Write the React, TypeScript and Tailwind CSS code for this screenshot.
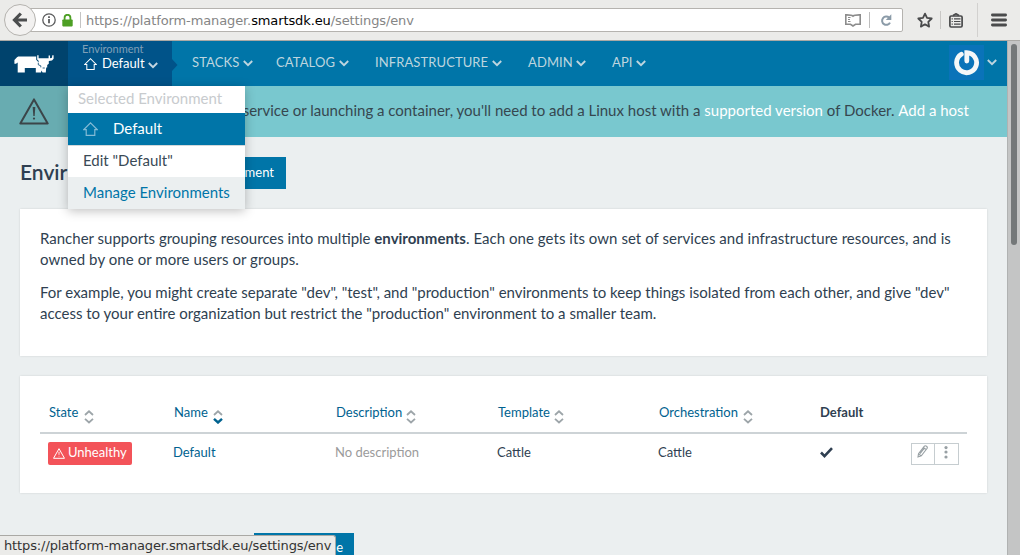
import React from "react";

const lato = "font-['Lato',sans-serif]";
const deja = "font-['DejaVu_Sans',sans-serif]";

function Chevron({ className = "" }: { className?: string }) {
  return (
    <svg width="10" height="7" viewBox="0 0 10 7" fill="none" stroke="currentColor" strokeWidth="1.9" className={`shrink-0 ${className}`}>
      <path d="M.8 1 5 5.2 9.2 1" />
    </svg>
  );
}

function House({ className = "" }: { className?: string }) {
  return (
    <svg viewBox="0 0 14 13" fill="none" stroke="currentColor" strokeWidth="1.1" className={className}>
      <path d="M3 7H.8L7 .8 13.2 7H11v5.4H3V7Z" />
    </svg>
  );
}

function Sort({ active = false }: { active?: boolean }) {
  return (
    <svg width="10" height="14" viewBox="0 0 10 14" fill="none" strokeWidth="1.8" className="mt-[8px] shrink-0">
      <path d="M1 5 5 1.3 9 5" stroke="#9da5a9" />
      <path d="M1 8.8 5 12.5 9 8.8" stroke={active ? "#00628f" : "#9da5a9"} strokeWidth={active ? 2.4 : 1.8} />
    </svg>
  );
}

function Warning({ className = "", strokeWidth = 2 }: { className?: string; strokeWidth?: number }) {
  return (
    <svg viewBox="0 0 30 27" fill="none" stroke="currentColor" strokeWidth={strokeWidth} strokeLinejoin="round" className={className}>
      <path d="M15 1.4 28.7 25.5H1.3Z" />
      <path d="M13.7 9h2.6l-.6 9h-1.4Z" fill="currentColor" stroke="none" />
      <circle cx="15" cy="20.6" r="1.1" fill="currentColor" stroke="none" />
    </svg>
  );
}

function BrowserBar() {
  return (
    <header className={`relative z-10 flex h-[41px] shrink-0 items-center border-b border-[#aaa9a5] bg-[#ebebe9] ${deja}`}>
      <div className="z-10 ml-1 flex size-8 shrink-0 items-center justify-center rounded-full border border-[#b5b3af] bg-[#f2f1f0]">
        <svg width="16" height="16" viewBox="0 0 16 16" fill="none" stroke="#4b4d4e" strokeWidth="3.2">
          <path d="M8.8 1.5 2.5 8l6.3 6.5M3 8h12" />
        </svg>
      </div>
      <div className="-ml-4 flex h-6 w-[883px] shrink-0 items-center rounded-r-[2px] border border-[#b5b3af] bg-white pl-[21px]">
        <svg width="14" height="14" viewBox="0 0 14 14" fill="none" stroke="#5a5b5c" strokeWidth="1.3">
          <circle cx="7" cy="7" r="6.2" />
          <path d="M7 6v4.3M7 3.3v1.6" strokeWidth="1.8" />
        </svg>
        <svg width="11" height="13" viewBox="0 0 11 13" className="ml-[6px]">
          <path d="M2.6 6V3.7a2.9 2.9 0 0 1 5.8 0V6" fill="none" stroke="#4d9f24" strokeWidth="1.8" />
          <rect x=".3" y="5.4" width="10.4" height="7" rx=".8" fill="#4d9f24" />
        </svg>
        <i className="ml-[7px] h-4 w-px bg-[#c4c4c4]" />
        <span className="ml-[5px] whitespace-nowrap pt-px text-[13px] tracking-[-0.11px] text-[#858585]">
          https://platform-manager.<span className="text-black">smartsdk.eu</span>/settings/env
        </span>
        <svg width="16" height="13" viewBox="0 0 16 13" fill="none" stroke="#8c8c8c" strokeWidth="1.6" className="ml-auto">
          <path d="M8 2.2C6.5.8 5 .9.8.9v9.4h4.7L8 12l2.5-1.7h4.7V.9C11 .9 9.5.8 8 2.2Z" />
          <path d="M3 3.5h2.5M3 5.5h2M3 7.5h2.5" strokeWidth="1" />
        </svg>
        <i className="ml-2 h-4 w-px bg-[#bdbdbd]" />
        <svg width="12" height="13" viewBox="0 0 12 13" className="ml-[10px] mr-[10px]">
          <path d="M9.2 3.6A4.2 4.2 0 1 0 10 8.6" fill="none" stroke="#8b9ba8" strokeWidth="2" />
          <path d="M11.3.3v5.6H5.8Z" fill="#8b9ba8" />
        </svg>
      </div>
      <svg width="16" height="16" viewBox="0 0 16 16" fill="none" stroke="#4a4b4c" strokeWidth="1.8" strokeLinejoin="round" className="ml-[14px] shrink-0">
        <path d="m8 1.6 2 4.3 4.7.6-3.4 3.3.8 4.8L8 12.3l-4.1 2.3.8-4.8L1.3 6.5 6 5.9Z" />
      </svg>
      <i className="ml-[7px] h-[18px] w-px bg-[#c8c7c5]" />
      <svg width="14" height="15" viewBox="0 0 14 15" fill="none" stroke="#4a4b4c" strokeWidth="1.7" className="ml-2 shrink-0">
        <rect x=".9" y="3" width="12.2" height="11" rx="1.2" />
        <path d="M4 2.5 7 .8l3 1.7" />
        <path d="M5 5.8h6.5M5 8.5h6.5M5 11.2h6.5M2.6 5.8h1.2M2.6 8.5h1.2M2.6 11.2h1.2" strokeWidth="1.2" />
      </svg>
      <i className="ml-[14px] h-[34px] w-px bg-[#d2d1cf]" />
      <svg width="16" height="14" viewBox="0 0 16 14" fill="none" stroke="#4a4b4c" strokeWidth="2.8" strokeLinecap="round" className="ml-[13px] shrink-0">
        <path d="M1.4 2h13.2M1.4 7h13.2M1.4 12h13.2" />
      </svg>
    </header>
  );
}

function NavItem({ label, className }: { label: string; className: string }) {
  return (
    <div className={`flex shrink-0 items-center ${className}`}>
      <span>{label}</span>
      <Chevron className="ml-auto mt-[2px]" />
    </div>
  );
}

function Nav() {
  return (
    <nav className="relative flex h-[45px] shrink-0 bg-[#0075a8] text-[13px] text-[#bed5df]">
      <div className="flex w-[68px] shrink-0 justify-center bg-[#00436d] pt-[13px]">
        <svg width="40" height="20" viewBox="0 0 40 20" fill="white">
          <path d="M3 3.2 4.2 2.6H22.2V5.8L24 7.8H32.2V13.4L31.8 18.6H28.6L27.4 16.6 27 18.6H21.8V14H10.8V18.6H3.7V8.4L2 9.8H.4V6Z" />
          <path d="M23.2 1.2H24.6V4.2H34.6V1.6H36V4.2L38 3.8 38.3 1.2H39.6V4.8L38 6.4 34.8 7V9.8L33.2 11V13.6H28L26.8 11.4 24.8 10.6V7L23.2 5.4Z" />
          <path d="M24.3 8.6V10.8L26.8 11.8V13.4" fill="none" stroke="#00436d" strokeWidth=".8" />
          <path d="M28.6 14H30.8" fill="none" stroke="#00436d" strokeWidth=".8" />
        </svg>
      </div>
      <div className="relative w-[104px] shrink-0 bg-[#005389] pl-[14px] pt-px">
        <p className="text-[11px] leading-[13px] text-[#7f9fb7]">Environment</p>
        <div className="flex items-center pl-[2px] leading-[17px] text-white">
          <House className="h-[12px] w-[13px]" />
          <span className="ml-[5px] w-[43px]">Default</span>
          <Chevron className="ml-[3px] mt-[3px] text-[#c5d6e1]" />
        </div>
        <svg width="6" height="12" viewBox="0 0 6 12" className="absolute left-full top-[18px]">
          <path d="M0 0 5.5 6 0 12Z" fill="#005389" />
        </svg>
      </div>
      <div className="flex pb-[2px] tracking-[0.1px]">
        <NavItem label="STACKS" className="ml-5 w-[61px]" />
        <NavItem label="CATALOG" className="ml-[23px] w-[73px]" />
        <NavItem label="INFRASTRUCTURE" className="ml-[26px] w-[127px]" />
        <NavItem label="ADMIN" className="ml-[26px] w-[58px]" />
        <NavItem label="API" className="ml-[26px] w-[34px]" />
      </div>
      <div className="ml-auto mt-1 flex size-[35px] items-center justify-center bg-[#0a73b9]">
        <svg width="27" height="27" viewBox="0 0 27 27" fill="none" stroke="#f5f7f8" strokeWidth="4.8" strokeLinecap="round">
          <path d="M8.3 5.2A10 10 0 1 0 13.8 3.7V12" />
        </svg>
      </div>
      <Chevron className="ml-[3px] mr-[10px] mt-[18px]" />
    </nav>
  );
}

function EnvMenu() {
  return (
    <div className="absolute left-[68px] top-[86px] z-10 w-[177px] bg-white text-[15px] shadow-[0_2px_10px_rgba(0,0,0,0.25)]">
      <div className="h-[27px] pl-[10px] leading-[25px] text-[#c8cbce]">Selected Environment</div>
      <div className="flex h-8 items-center bg-[#0075a8] pl-[15px] text-white">
        <House className="h-[14px] w-[15px] text-[#83bbd5]" />
        <span className="-mt-[2px] ml-[15px]">Default</span>
      </div>
      <div className="h-8 border-t border-[#d3d8da] pl-[15px] leading-[28px] text-[#3a4a56]">Edit "Default"</div>
      <div className="h-8 bg-[#ebeff0] pl-[15px] leading-[30px] text-[#0075a8]">Manage Environments</div>
    </div>
  );
}

function Banner() {
  return (
    <div className="flex h-[51px] shrink-0 bg-[#79c8cf] text-[15px] text-[#36474f]">
      <div className="flex w-[68px] shrink-0 items-center justify-center bg-[#68acb1]">
        <Warning className="h-[27px] w-[30px] text-[#3b4549]" />
      </div>
      <p className="flex flex-1 justify-end overflow-hidden whitespace-pre pr-[38px] leading-[48px]">
        <span>service or launching a container, you'll need to add a Linux host with a </span>
        <a className="text-white">supported version</a>
        <span> of Docker. </span>
        <a className="text-white">Add a host</a>
      </p>
    </div>
  );
}

function Environments() {
  const columns = [
    { label: "State", sort: true, gap: "gap-[6px]" },
    { label: "Name", sort: true, active: true, gap: "gap-[5px]" },
    { label: "Description", sort: true, gap: "gap-[4px]" },
    { label: "Template", sort: true, gap: "gap-[4px]" },
    { label: "Orchestration", sort: true, gap: "gap-[5px]" },
    { label: "Default", sort: false, gap: "" },
  ];
  const grid = "grid grid-cols-[125px_162px_162px_161px_161px_1fr]";
  return (
    <section className="mt-5 h-[117px] shrink-0 bg-white px-5 pt-[26px] text-[13px] shadow-[0_0_2px_rgba(0,0,0,0.12)]">
      <div className={`${grid} h-8 border-b-2 border-[#cdd3d6] pl-[9px] text-[#00628f]`}>
        {columns.map((c) => (
          <div key={c.label} className={`flex h-[21px] items-center ${c.gap}`}>
            <span className={c.sort ? "" : "font-bold text-[#2f3f51]"}>{c.label}</span>
            {c.sort && <Sort active={c.active} />}
          </div>
        ))}
      </div>
      <div className={`${grid} h-[38px] items-center pl-2 text-[#2f3f51]`}>
        <span className="flex h-[23px] w-[84px] items-center rounded-[2px] bg-[#f35359] pb-px pl-[5px] text-white">
          <Warning className="mr-[3px] mt-[2px] h-[11px] w-[12px]" strokeWidth={2.5} />
          Unhealthy
        </span>
        <a className="text-[#00628f]">Default</a>
        <span className="text-[#9b9b9b]">No description</span>
        <span>Cattle</span>
        <span>Cattle</span>
        <div className="flex items-center justify-between pl-px pr-2">
          <svg width="13" height="11" viewBox="0 0 13 11" fill="none" stroke="#2f3f51" strokeWidth="2.6" className="-mt-[2px]">
            <path d="m1 5.5 3.5 3.6L12 1.2" />
          </svg>
          <div className="mt-[2px] flex h-[22px] w-12 border border-[#c6cdd0] text-[#98a0a4]">
            <div className="flex w-[23px] justify-center border-r border-[#c6cdd0] pr-px pt-[1px]">
              <svg width="11" height="13" viewBox="0 0 11 13" fill="none" stroke="currentColor" strokeWidth="1.1">
                <path d="m1 12 .5-3.3L7.2 1.3c1.2-1.4 4 .4 2.8 2.2L4.3 10.8ZM6.3 2.5l2.8 2M3 8.7l4-5M1.5 8.9l2.6 1.8" />
              </svg>
            </div>
            <div className="flex flex-1 justify-center pr-px pt-[2px]">
              <svg width="4" height="13" viewBox="0 0 4 13" fill="currentColor">
                <circle cx="2" cy="1.6" r="1.6" />
                <circle cx="2" cy="6" r="1.6" />
                <circle cx="2" cy="11" r="1.6" />
              </svg>
            </div>
          </div>
        </div>
      </div>
    </section>
  );
}

export default function App() {
  return (
    <div className={`relative flex h-[555px] w-[1020px] flex-col overflow-hidden bg-[#ebeff0] ${lato}`}>
      <BrowserBar />
      <div className="flex min-h-0 flex-1">
        <div className="flex w-[1007px] shrink-0 flex-col overflow-hidden">
          <Nav />
          <Banner />
          <main className="flex flex-col px-5 pt-5 text-[#2f3f51]">
            <div className="flex h-8 shrink-0 items-center justify-between pr-[701px]">
              <h1 className="w-12 overflow-hidden whitespace-nowrap pb-[2px] text-[21px] font-semibold">Envir</h1>
              <button className="flex h-8 w-[119px] shrink-0 items-center justify-end whitespace-nowrap bg-[#0075a8] pr-3 text-[13px] text-white">
                ment
              </button>
            </div>
            <section className="mt-5 h-[147px] shrink-0 bg-white px-5 pt-[19px] text-[15px] leading-[21.4px] shadow-[0_0_2px_rgba(0,0,0,0.12)]">
              <p className="whitespace-nowrap">
                Rancher supports grouping resources into multiple <b>environments</b>
                <span className="tracking-[0.045px]">. Each one gets its own set of services and infrastructure resources, and is</span>
                <br />
                <span className="tracking-[0.07px]">owned by one or more users or groups.</span>
              </p>
              <p className="mt-[11px] whitespace-nowrap">
                For example, you might create separate "dev", "test", and "production" environments to keep things isolated from each other, and give "dev"
                <br />
                access to your entire organization but restrict the "production" environment to a smaller team.
              </p>
            </section>
            <Environments />
            <button className="ml-[234px] mt-10 flex h-8 w-[100px] shrink-0 items-center justify-end bg-[#0075a8] pb-[2px] pr-[11px] text-[13px] text-white">
              e
            </button>
          </main>
        </div>
        <div className="flex flex-1 justify-center border-l border-[#b0b2b2] bg-[#c4c5c5] pt-[3px]">
          <div className="h-[201px] w-[6px] rounded-full bg-[#747879]" />
        </div>
      </div>
      <EnvMenu />
      <div className={`absolute bottom-0 left-0 z-20 h-5 w-[336px] whitespace-nowrap rounded-tr-[3px] border-r border-t border-[#aaa9a5] bg-[#ebebe9] pl-1 text-[13px] leading-[20px] tracking-[-0.12px] text-[#333] ${deja}`}>
        https://platform-manager.smartsdk.eu/settings/env
      </div>
    </div>
  );
}
